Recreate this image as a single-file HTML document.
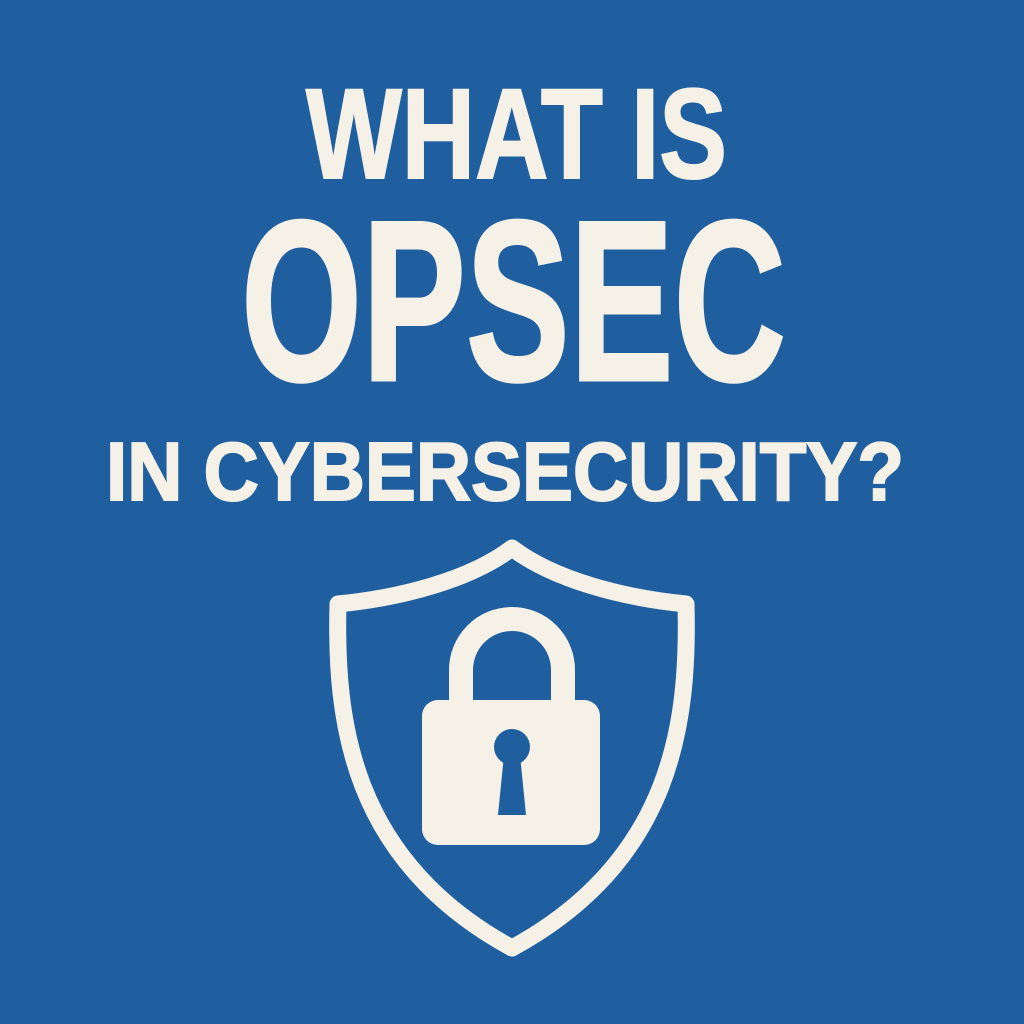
<!DOCTYPE html>
<html><head><meta charset="utf-8"><style>
html,body{margin:0;padding:0;background:#1f5f9f;}
svg{display:block}
</style></head><body>
<svg width="1024" height="1024" viewBox="0 0 1024 1024" xmlns="http://www.w3.org/2000/svg">
<rect width="1024" height="1024" fill="#1f5f9f"/>
<g fill="#f6f1e7" stroke="#f6f1e7" font-family="'Liberation Sans Narrow','Liberation Sans',sans-serif" font-weight="bold">
<text x="306" y="178" font-size="128" stroke-width="2" textLength="421" lengthAdjust="spacingAndGlyphs">WHAT IS</text>
<text x="241" y="380" font-size="229" stroke-width="3" textLength="545" lengthAdjust="spacingAndGlyphs">OPSEC</text>
<text x="106" y="500" font-size="83" stroke-width="2" textLength="798" lengthAdjust="spacingAndGlyphs">IN CYBERSECURITY?</text>
</g>
<path d="M512 548 C470 580 400 598 338 604 C335 720 350 860 512 948 C674 860 689 720 686 604 C624 598 554 580 512 548 Z" fill="none" stroke="#f6f1e7" stroke-width="17" stroke-linejoin="round"/>
<path d="M461 702 V670 A51 51 0 0 1 563 670 V702" fill="none" stroke="#f6f1e7" stroke-width="24"/>
<rect x="422" y="700" width="178" height="145" rx="16" fill="#f6f1e7"/>
<circle cx="512" cy="747" r="18" fill="#1f5f9f"/>
<path d="M504 755 L498 815 H526 L520 755 Z" fill="#1f5f9f"/>
</svg>
</body></html>
